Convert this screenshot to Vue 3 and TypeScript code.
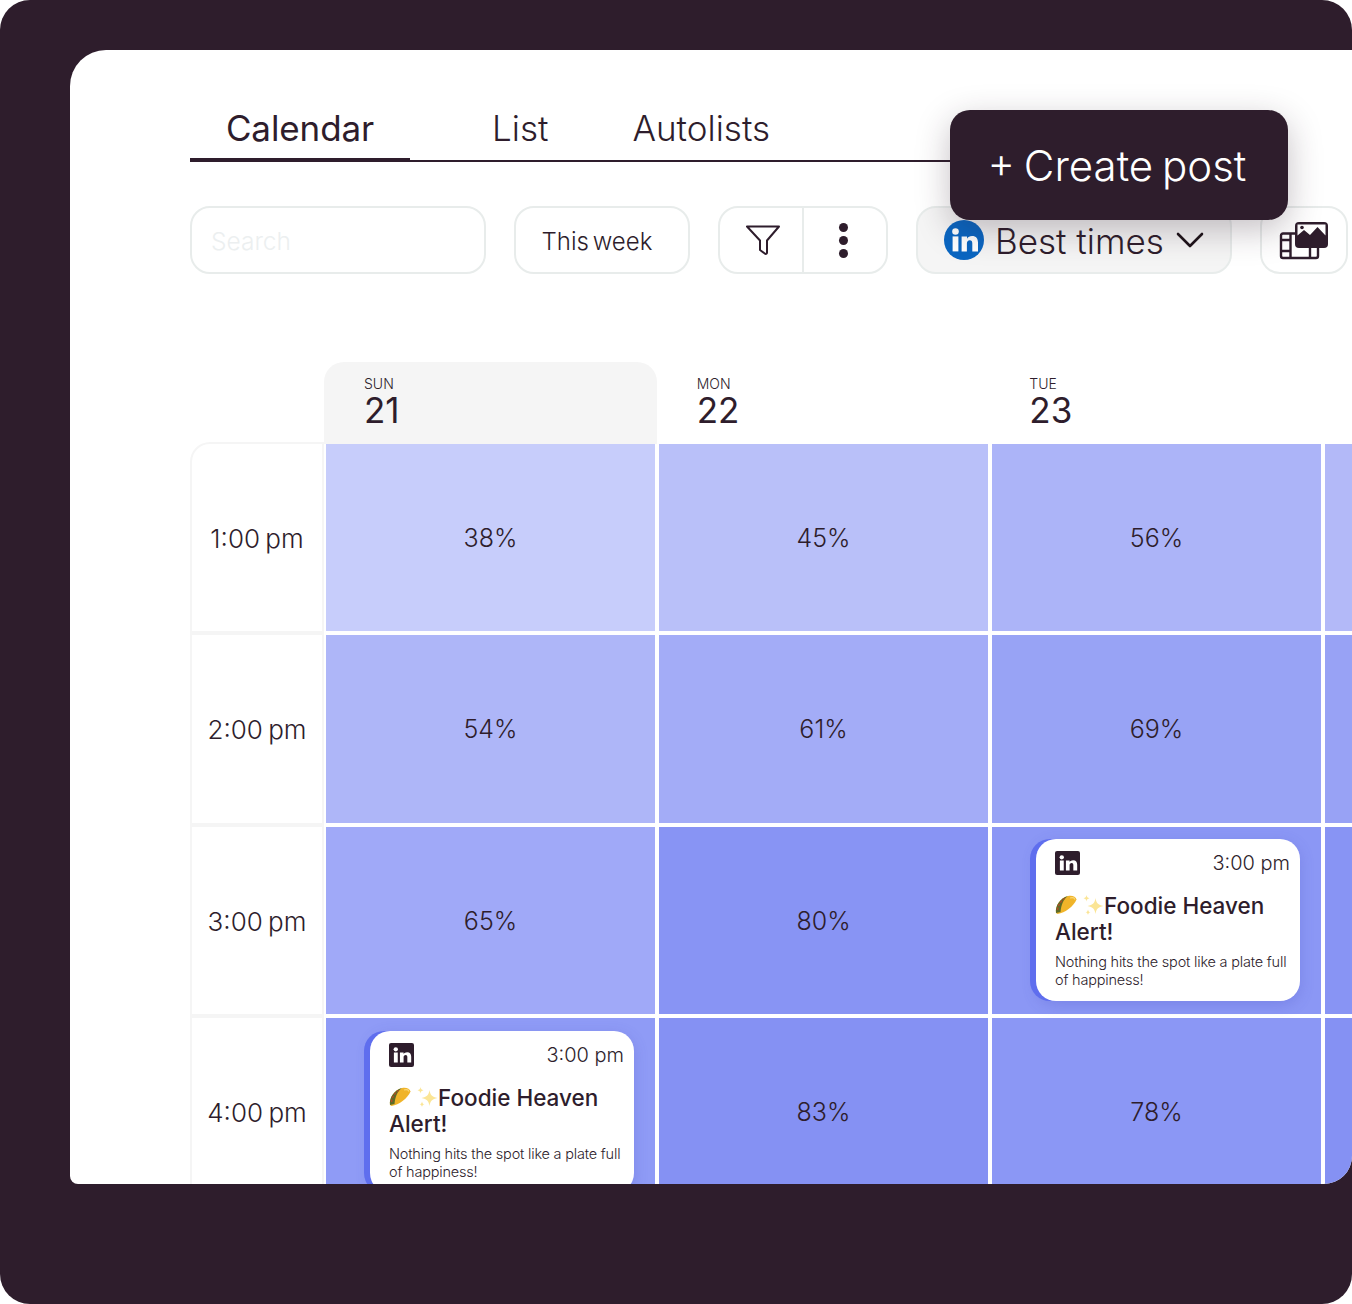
<script setup lang="ts">
interface SlotCell {
  value: string
  color: string
  post?: boolean
}
interface Row {
  time: string
  cells: SlotCell[]
  edge: string
}

const days = [
  { name: 'SUN', num: '21', today: true },
  { name: 'MON', num: '22', today: false },
  { name: 'TUE', num: '23', today: false },
]

const rows: Row[] = [
  {
    time: '1:00 pm',
    edge: '#b3b9f8',
    cells: [
      { value: '38%', color: '#c7cdfb' },
      { value: '45%', color: '#b9c0f9' },
      { value: '56%', color: '#acb4f8' },
    ],
  },
  {
    time: '2:00 pm',
    edge: '#98a2f5',
    cells: [
      { value: '54%', color: '#aeb6f8' },
      { value: '61%', color: '#a3acf7' },
      { value: '69%', color: '#98a3f5' },
    ],
  },
  {
    time: '3:00 pm',
    edge: '#8894f4',
    cells: [
      { value: '65%', color: '#a0a9f8' },
      { value: '80%', color: '#8894f4' },
      { value: '', color: '#8b97f5', post: true },
    ],
  },
  {
    time: '4:00 pm',
    edge: '#8591f3',
    cells: [
      { value: '', color: '#8f9bf6', post: true },
      { value: '83%', color: '#8591f3' },
      { value: '78%', color: '#8b97f5' },
    ],
  },
]
</script>

<template>
  <div class="frame">
    <div class="panel">
      <div class="tabs">
        <div class="tab active">Calendar</div>
        <div class="tab list">List</div>
        <div class="tab auto">Autolists</div>
      </div>

      <button class="create">+ Create post</button>

      <div class="toolbar">
        <div class="box search">Search</div>
        <div class="box week">This week</div>
        <div class="box tools">
          <div class="tool">
            <svg width="36" height="34" viewBox="0 0 36 34" fill="none">
              <path d="M2 3.5h32L22 17.500v12.200c0 1.200-1.400 1.600-2.200.8L15 27V17.500z" stroke="#2e1d2c" stroke-width="2" stroke-linejoin="round" />
            </svg>
          </div>
          <div class="tool dots"><i></i><i></i><i></i></div>
        </div>
        <div class="box best">
          <svg class="in-round" width="40" height="40" viewBox="0 0 40 40">
            <circle cx="20" cy="20" r="20" fill="#0a66c2" />
            <circle cx="11.500" cy="11.500" r="3.300" fill="#fff" />
            <rect x="8.600" y="16.400" width="5.800" height="15" fill="#fff" />
            <path d="M17.600 16.400h5.400v2.300c1-1.600 2.800-2.700 5-2.700 4.200 0 6 2.600 6 6.800v8.600h-5.700v-7.800c0-2.200-.7-3.300-2.500-3.300-1.900 0-2.900 1.300-2.900 3.400v7.700h-5.300z" fill="#fff" />
          </svg>
          <span>Best times</span>
          <svg class="chev" width="28" height="16" viewBox="0 0 28 16" fill="none">
            <path d="M2 2l12 12L26 2" stroke="#1d1319" stroke-width="2.600" stroke-linecap="round" stroke-linejoin="round" />
          </svg>
        </div>
        <div class="box media">
          <svg width="50" height="40" viewBox="0 0 50 40" fill="none">
            <path d="M16 13.500H4a2 2 0 0 0-2 2V36a2 2 0 0 0 2 2h33a2 2 0 0 0 2-2v-8" stroke="#2e1d2c" stroke-width="2.400" />
            <path d="M11.500 13.500V38M2 20h9.500M2 31h9.500M31 28v10" stroke="#2e1d2c" stroke-width="2.400" />
            <rect x="16" y="2" width="33" height="26" rx="4" fill="#2e1d2c" />
            <path d="M18.500 15.500l6.500-5.500 6 5 7.500-8 8 8.500V4.500h-28z" fill="#fff" />
            <circle cx="23" cy="7.500" r="1.800" fill="#2e1d2c" />
          </svg>
        </div>
      </div>

      <div class="calendar">
        <div class="head-row">
          <div class="head-gap"></div>
          <div v-for="d in days" :key="d.num" class="head" :class="{ today: d.today }">
            <div class="head-name">{{ d.name }}</div>
            <div class="head-num">{{ d.num }}</div>
          </div>
        </div>

        <div class="body">
          <div v-for="r in rows" :key="r.time" class="row">
            <div class="time">{{ r.time }}</div>
            <div v-for="(c, i) in r.cells" :key="i" class="cell" :style="{ background: c.color }">
              <template v-if="!c.post">{{ c.value }}</template>
              <div v-else class="post">
                <div class="post-top">
                  <svg width="25" height="24" viewBox="0 0 24 24" preserveAspectRatio="none">
                    <rect width="24" height="24" rx="2" fill="#2e1d2c" />
                    <circle cx="6.500" cy="6.300" r="2.100" fill="#fff" />
                    <rect x="4.700" y="9.500" width="3.700" height="10" fill="#fff" />
                    <path d="M10.500 9.500H14v1.500c.7-1.100 1.900-1.800 3.400-1.800 2.800 0 3.900 1.800 3.900 4.500v5.800h-3.700v-5.200c0-1.400-.5-2.200-1.700-2.200s-1.900.9-1.900 2.300v5.100h-3.500z" fill="#fff" />
                  </svg>
                  <span>3:00 pm</span>
                </div>
                <div class="post-title">
                  <svg class="taco" width="22" height="20" viewBox="0 0 22 20">
                    <path d="M1 18C0 11 5 3 13 1c4-.9 8 .6 8.500 3.500C19 11 10 18 2.500 19z" fill="#f0b429" />
                    <path d="M1 18C0 11 5 3 13 1 8.500 4 6 10 5.500 17z" fill="#5e6b27" />
                    <path d="M2.500 15C3 10 6 6 9.500 3.500" stroke="#b9462a" stroke-width="1.300" fill="none" stroke-dasharray="2.500 1.500" />
                    <path d="M15 3c3-.8 4.500 0 5 1.500" stroke="#f9d777" stroke-width="1.200" fill="none" />
                  </svg>
                  <svg class="spark" width="22" height="22" viewBox="0 0 22 22">
                    <path d="M13.500 3c.8 5 2.500 7 8 8-5.500 1-7.200 3-8 8-.8-5-2.500-7-8-8 5.500-1 7.200-3 8-8z" fill="#fbe595" />
                    <path d="M4.500 0c.3 2 1 2.800 3 3.200-2 .4-2.700 1.200-3 3.200-.3-2-1-2.800-3-3.200 2-.4 2.700-1.200 3-3.200z" fill="#fbe595" />
                    <path d="M6 14.500c.3 1.700.9 2.400 2.500 2.800-1.600.4-2.200 1.100-2.500 2.800-.3-1.700-.9-2.400-2.500-2.800 1.600-.4 2.200-1.100 2.500-2.800z" fill="#fbe595" />
                  </svg>Foodie Heaven Alert!
                </div>
                <div class="post-text">Nothing hits the spot like a plate full of happiness!</div>
              </div>
            </div>
            <div class="cell edge" :style="{ background: r.edge }"></div>
          </div>
        </div>
      </div>
    </div>
  </div>
</template>

<style>
html,
body {
  margin: 0;
  background: #fff;
}
</style>

<style scoped>
.frame {
  width: 1352px;
  height: 1304px;
  box-sizing: border-box;
  padding: 50px 0 120px 70px;
  background: #2e1d2c;
  border-radius: 30px;
  overflow: hidden;
  font-family: Inter, "Liberation Sans", sans-serif;
  color: #2e1d2c;
}
.panel {
  position: relative;
  height: 100%;
  box-sizing: border-box;
  padding: 50px 0 0 120px;
  background: #fff;
  border-radius: 36px 0 28px 8px;
  overflow: hidden;
}
.tabs {
  display: flex;
  height: 62px;
  margin-right: 150px;
  border-bottom: 2px solid #2e1d2c;
  box-sizing: border-box;
}
.tab {
  font-size: 35px;
  font-weight: 300;
  line-height: 56px;
}
.tab.active {
  width: 220px;
  height: 61px;
  flex: none;
  box-sizing: border-box;
  text-align: center;
  border-bottom: 3px solid #2e1d2c;
  font-weight: 400;
  letter-spacing: -0.1px;
}
.tab.list {
  margin-left: 82px;
}
.tab.auto {
  margin-left: 84px;
}
.create {
  position: absolute;
  left: 880px;
  top: 60px;
  width: 338px;
  height: 110px;
  padding: 0 4px 0 0;
  border: 0;
  border-radius: 20px;
  background: #2e1d2c;
  color: #fff;
  font: 300 42px Inter, "Liberation Sans", sans-serif;
  word-spacing: -3px;
  box-shadow: 0 10px 34px rgba(46, 29, 44, 0.28);
  z-index: 2;
}
.toolbar {
  display: flex;
  gap: 28px;
  margin-top: 44px;
  height: 68px;
}
.box {
  flex: none;
  display: flex;
  align-items: center;
  box-sizing: border-box;
  height: 68px;
  border: 2px solid #e8eceb;
  border-radius: 20px;
  background: #fff;
}
.search {
  width: 296px;
  padding: 2px 0 0 19px;
  font-size: 24.5px;
  font-weight: 300;
  color: #eceff0;
}
.week {
  width: 176px;
  justify-content: center;
  padding-top: 2px;
  padding-right: 10px;
  font-size: 24px;
  font-weight: 300;
  word-spacing: -3px;
}
.tools {
  width: 170px;
}
.tool {
  display: flex;
  align-items: center;
  justify-content: center;
  box-sizing: border-box;
  width: 84px;
  height: 100%;
  padding-left: 4px;
  border-right: 2px solid #e8eceb;
}
.tool.dots {
  flex: 1;
  flex-direction: column;
  gap: 4px;
  padding: 0 4px 0 0;
  border-right: 0;
}
.dots i {
  width: 9px;
  height: 9px;
  border-radius: 50%;
  background: #2e1d2c;
}
.best {
  width: 316px;
  padding-left: 26px;
  background: #f5f5f5;
  font-size: 35px;
  font-weight: 300;
}
.best span {
  margin: 2px 0 0 11px;
}
.chev {
  margin-left: 12px;
}
.media {
  width: 88px;
  justify-content: center;
}
.calendar {
  margin-top: 88px;
}
.head-row {
  display: flex;
  height: 82px;
}
.head-gap {
  width: 134px;
  flex: none;
}
.head {
  flex: none;
  width: 332.67px;
  box-sizing: border-box;
  padding: 15px 0 0 40px;
  border-radius: 20px 20px 0 0;
}
.head.today {
  background: #f5f5f5;
}
.head-name {
  font-size: 14px;
  font-weight: 300;
  line-height: 14px;
}
.head-num {
  font-size: 35px;
  font-weight: 400;
  line-height: 38px;
}
.row {
  display: flex;
  height: 187.33px;
  margin-bottom: 4px;
}
.time {
  flex: none;
  width: 134px;
  height: calc(100% + 4px);
  box-sizing: border-box;
  border: 0 solid #f5f5f5;
  border-width: 0 2px 4px 2px;
  padding-top: 2px;
  display: flex;
  align-items: center;
  justify-content: center;
  font-size: 26px;
  font-weight: 300;
  word-spacing: -2px;
  white-space: nowrap;
}
.row:first-child .time {
  height: calc(100% + 6px);
  margin-top: -2px;
  border-top-width: 2px;
  border-top-left-radius: 20px;
}
.cell {
  flex: none;
  width: 329px;
  height: 100%;
  margin-right: 4px;
  padding-top: 1px;
  display: flex;
  align-items: center;
  justify-content: center;
  box-sizing: border-box;
  font-size: 25px;
  font-weight: 300;
  position: relative;
}
.cell:nth-child(2) {
  margin-left: 2px;
}
.cell.edge {
  width: 60px;
  margin-right: 0;
}
.post {
  position: absolute;
  left: 44px;
  top: 12.6px;
  width: 264px;
  height: 162px;
  box-sizing: border-box;
  padding: 12px 10px 0 19px;
  background: #fff;
  border-radius: 20px;
  box-shadow: -6px 0 0 #5f6eee, 0 4px 14px rgba(70, 80, 190, 0.25);
  color: #2e1d2c;
  font-size: 16px;
  font-weight: 400;
}
.post-top {
  display: flex;
  justify-content: space-between;
  align-items: center;
  height: 24px;
  font-size: 20px;
  font-weight: 300;
}
.post-title {
  margin-top: 18px;
  font-size: 22.5px;
  font-weight: 500;
  line-height: 26px;
}
.taco {
  vertical-align: -1px;
  margin-right: 5px;
}
.spark {
  vertical-align: -3px;
}
.post-text {
  margin-top: 8px;
  font-size: 14.5px;
  font-weight: 300;
  line-height: 18px;
  letter-spacing: -0.2px;
}
</style>
